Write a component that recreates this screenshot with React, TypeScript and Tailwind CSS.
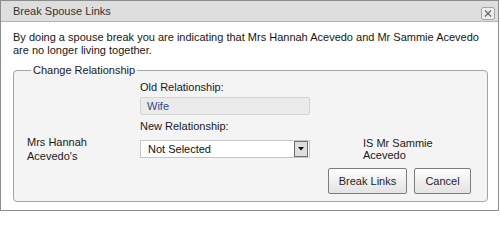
import type { ReactNode } from "react";

function CloseButton() {
  return (
    <button
      type="button"
      aria-label="Close"
      className="mb-px flex h-[13px] w-[14px] items-center justify-center self-end rounded-[2px] border border-[#a3a3a3] bg-[#ededed]"
    >
      <svg width="8" height="7" viewBox="0 0 8 7" aria-hidden="true">
        <path d="M1 0.5 L7 6.5 M7 0.5 L1 6.5" stroke="#6a6a6a" strokeWidth="1.2" />
      </svg>
    </button>
  );
}

function DialogButton({ children, width }: { children: ReactNode; width: string }) {
  return (
    <button
      type="button"
      className={`h-[26px] ${width} rounded-[2px] border border-[#7d7d7d] bg-[linear-gradient(180deg,#fdfdfd,#e3e3e3)] text-[11px] text-[#1e1e1e]`}
    >
      {children}
    </button>
  );
}

function FakeSelect({ value }: { value: string }) {
  return (
    <div className="flex h-[18px] w-[170px] items-center justify-between border border-[#c6c6c6] bg-white pl-[7px] pr-px">
      <span className="text-[11px] leading-[13px] text-[#111]">{value}</span>
      <span className="flex h-[16px] w-[14px] items-center justify-center border border-[#6e6e6e] bg-[#dedede]">
        <svg width="6" height="4" viewBox="0 0 6 4" aria-hidden="true">
          <path d="M0 0 H6 L3 3.5 Z" fill="#111" />
        </svg>
      </span>
    </div>
  );
}

export default function App() {
  return (
    <div className="h-[212px] w-[500px] bg-white font-['Liberation_Sans',Arial,sans-serif]">
      <div className="flex h-[211px] w-[499px] flex-col border border-[#8c8c8c] bg-white">
        <div className="flex h-[21px] shrink-0 items-center justify-between border-b border-[#b3b3b3] bg-[#dedede] pl-[12px] pr-[3px]">
          <span className="text-[11px] leading-[13px] text-[#333]">Break Spouse Links</span>
          <CloseButton />
        </div>

        <div className="px-[12px] pt-[9px]">
          <p className="whitespace-nowrap text-[11px] leading-[13px] text-[#161616]">
            By doing a spouse break you are indicating that Mrs Hannah Acevedo and Mr Sammie Acevedo
            <br />
            are no longer living together.
          </p>

          <fieldset className="mt-[6px] w-[475px] rounded-[4px] border border-[#a4a4a4] bg-[#f4f4f4] pb-[7px]">
            <legend className="ml-[17px] px-[2px] text-[11px] leading-[14px] text-[#222]">
              Change Relationship
            </legend>

            <div className="flex flex-col pl-[126px] pt-[4px]">
              <span className="text-[11px] leading-[13px] text-[#1a1a1a]">Old Relationship:</span>
              <div className="mt-[3px] flex h-[18px] w-[170px] items-center rounded-[2px] border border-[#d4d4d4] bg-[#ebebeb] pl-[6px]">
                <span className="text-[11px] leading-[13px] text-[#2b4a8b]">Wife</span>
              </div>
              <span className="mt-[5px] text-[11px] leading-[13px] text-[#1a1a1a]">New Relationship:</span>
            </div>

            <div className="mt-[2px] flex h-[28px] items-center pl-[13px]">
              <span className="w-[113px] text-[11px] leading-[14px] text-[#1a1a1a]">
                Mrs Hannah
                <br />
                Acevedo's
              </span>
              <FakeSelect value="Not Selected" />
              <span className="ml-[53px] text-[11px] leading-[12px] text-[#1a1a1a]">
                IS Mr Sammie
                <br />
                Acevedo
              </span>
            </div>

            <div className="mt-[5px] flex justify-end gap-[7px] pr-[16px]">
              <DialogButton width="w-[79px]">Break Links</DialogButton>
              <DialogButton width="w-[57px]">Cancel</DialogButton>
            </div>
          </fieldset>
        </div>
      </div>
    </div>
  );
}
